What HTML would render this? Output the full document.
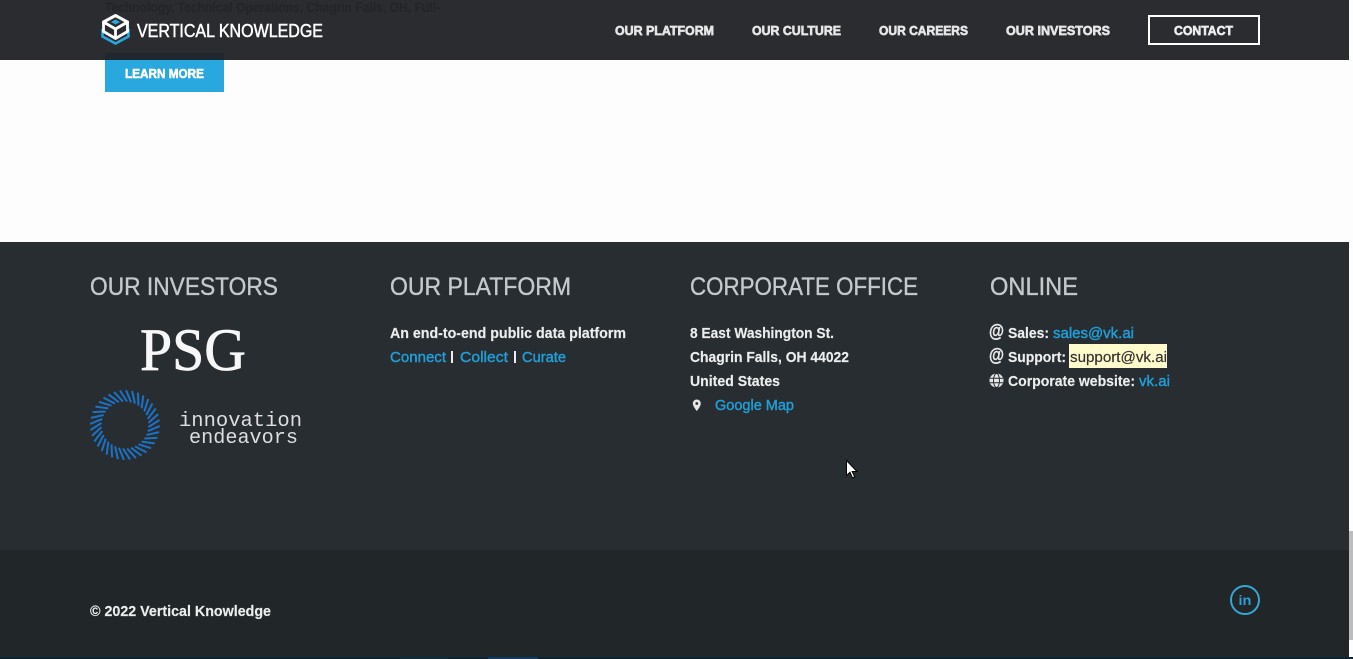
<!DOCTYPE html>
<html lang="en">
<head>
<meta charset="utf-8">
<title>Vertical Knowledge</title>
<style>
html,body{margin:0;padding:0;background:#fdfdfd;overflow:hidden}
svg{display:block;position:absolute;left:0;top:0}
text{font-family:"Liberation Sans",sans-serif}
.h{font-size:25px;fill:#c6c9cb;stroke:#c6c9cb;stroke-width:.35px}
.b{font-size:15px;font-weight:700;fill:#eceded;stroke:#eceded;stroke-width:.15px}
.l{font-size:15px;font-weight:400;fill:#219fd8;stroke:#219fd8;stroke-width:.4px}
.n{font-size:12.5px;font-weight:700;fill:#e6e6e7;stroke:#e6e6e7;stroke-width:.65px}
.m{font-family:"Liberation Mono",monospace;font-size:20.5px;fill:#dcdedf}
.a{font-size:18px;font-weight:700;fill:#e6e7e8;stroke:#e6e7e8;stroke-width:.4px}
</style>
</head>
<body>
<svg width="1353" height="659" viewBox="0 0 1353 659" xmlns="http://www.w3.org/2000/svg">
<rect width="1353" height="659" fill="#fdfdfd"/>

<!-- button -->
<rect x="105" y="53" width="119" height="39" fill="#29a8e0"/>
<text x="125" y="78" font-size="13" font-weight="700" fill="#fff" stroke="#fff" stroke-width=".6" textLength="79" lengthAdjust="spacingAndGlyphs">LEARN MORE</text>

<!-- header -->
<rect width="1349" height="60" fill="#2b2c30"/>
<rect x="105" y="53" width="119" height="7" fill="#20272f"/>
<text x="105" y="12" font-size="14" font-weight="700" fill="#232428" textLength="335" lengthAdjust="spacingAndGlyphs">Technology, Technical Operations, Chagrin Falls, OH, Full-</text>

<!-- logo -->
<path d="M102.500 29v7.500L115.500 43.500 128.500 36.500V29" fill="none" stroke="#29a8e0" stroke-width="2.600"/>
<path d="M115.500 15.500 127.500 22 115.500 29 103.500 22Z" fill="none" stroke="#fff" stroke-width="3" stroke-linejoin="round"/>
<path d="M103.500 22v9.500L115.500 38.500 127.500 31.500V22M115.500 29v9" fill="none" stroke="#fff" stroke-width="2.800"/>
<path d="M115.500 19.500 120 22 115.500 24.500 111 22Z" fill="#29a8e0"/>
<text x="137" y="37" font-size="18" fill="#fff" stroke="#fff" stroke-width=".5" textLength="186" lengthAdjust="spacingAndGlyphs">VERTICAL KNOWLEDGE</text>

<!-- nav -->
<text class="n" x="615" y="35" textLength="99" lengthAdjust="spacingAndGlyphs">OUR PLATFORM</text>
<text class="n" x="752" y="35" textLength="89" lengthAdjust="spacingAndGlyphs">OUR CULTURE</text>
<text class="n" x="879" y="35" textLength="89" lengthAdjust="spacingAndGlyphs">OUR CAREERS</text>
<text class="n" x="1006" y="35" textLength="104" lengthAdjust="spacingAndGlyphs">OUR INVESTORS</text>
<rect x="1149" y="16" width="110" height="28" fill="none" stroke="#fff" stroke-width="2"/>
<text class="n" x="1174" y="35" textLength="59" lengthAdjust="spacingAndGlyphs" style="fill:#f2f2f2">CONTACT</text>

<!-- footer -->
<rect y="242" width="1349" height="308" fill="#282d31"/>
<rect y="550" width="1349" height="107" fill="#212629"/>
<rect y="657" width="1353" height="2" fill="#0a2236"/>
<rect x="400" y="657" width="48" height="2" fill="#0b2f3a"/>
<rect x="488" y="657" width="50" height="2" fill="#0c3a60"/>
<rect x="1349" y="531" width="4" height="109" fill="#bdbdbd"/>

<text class="h" x="90" y="295" textLength="188" lengthAdjust="spacingAndGlyphs">OUR INVESTORS</text>
<text class="h" x="390" y="295" textLength="181" lengthAdjust="spacingAndGlyphs">OUR PLATFORM</text>
<text class="h" x="690" y="295" textLength="228" lengthAdjust="spacingAndGlyphs">CORPORATE OFFICE</text>
<text class="h" x="990" y="295" textLength="88" lengthAdjust="spacingAndGlyphs">ONLINE</text>

<!-- PSG -->
<text x="140" y="370" font-size="60" stroke="#f7f7f7" stroke-width=".7" style="font-family:'Liberation Serif',serif" fill="#f7f7f7" textLength="106" lengthAdjust="spacingAndGlyphs">PSG</text>

<!-- innovation endeavors ring -->
<g stroke="#1c72c4" stroke-width="2" fill="none">
<line x1="120" y1="390.500" x2="127" y2="401.500" transform="rotate(0 125 425)"/>
<line x1="120" y1="390.500" x2="127" y2="401.500" transform="rotate(10 125 425)"/>
<line x1="120" y1="390.500" x2="127" y2="401.500" transform="rotate(20 125 425)"/>
<line x1="120" y1="390.500" x2="127" y2="401.500" transform="rotate(30 125 425)"/>
<line x1="120" y1="390.500" x2="127" y2="401.500" transform="rotate(40 125 425)"/>
<line x1="120" y1="390.500" x2="127" y2="401.500" transform="rotate(50 125 425)"/>
<line x1="120" y1="390.500" x2="127" y2="401.500" transform="rotate(60 125 425)"/>
<line x1="120" y1="390.500" x2="127" y2="401.500" transform="rotate(70 125 425)"/>
<line x1="120" y1="390.500" x2="127" y2="401.500" transform="rotate(80 125 425)"/>
<line x1="120" y1="390.500" x2="127" y2="401.500" transform="rotate(90 125 425)"/>
<line x1="120" y1="390.500" x2="127" y2="401.500" transform="rotate(100 125 425)"/>
<line x1="120" y1="390.500" x2="127" y2="401.500" transform="rotate(110 125 425)"/>
<line x1="120" y1="390.500" x2="127" y2="401.500" transform="rotate(120 125 425)"/>
<line x1="120" y1="390.500" x2="127" y2="401.500" transform="rotate(130 125 425)"/>
<line x1="120" y1="390.500" x2="127" y2="401.500" transform="rotate(140 125 425)"/>
<line x1="120" y1="390.500" x2="127" y2="401.500" transform="rotate(150 125 425)"/>
<line x1="120" y1="390.500" x2="127" y2="401.500" transform="rotate(160 125 425)"/>
<line x1="120" y1="390.500" x2="127" y2="401.500" transform="rotate(170 125 425)"/>
<line x1="120" y1="390.500" x2="127" y2="401.500" transform="rotate(180 125 425)"/>
<line x1="120" y1="390.500" x2="127" y2="401.500" transform="rotate(190 125 425)"/>
<line x1="120" y1="390.500" x2="127" y2="401.500" transform="rotate(200 125 425)"/>
<line x1="120" y1="390.500" x2="127" y2="401.500" transform="rotate(210 125 425)"/>
<line x1="120" y1="390.500" x2="127" y2="401.500" transform="rotate(220 125 425)"/>
<line x1="120" y1="390.500" x2="127" y2="401.500" transform="rotate(230 125 425)"/>
<line x1="120" y1="390.500" x2="127" y2="401.500" transform="rotate(240 125 425)"/>
<line x1="120" y1="390.500" x2="127" y2="401.500" transform="rotate(250 125 425)"/>
<line x1="120" y1="390.500" x2="127" y2="401.500" transform="rotate(260 125 425)"/>
<line x1="120" y1="390.500" x2="127" y2="401.500" transform="rotate(270 125 425)"/>
<line x1="120" y1="390.500" x2="127" y2="401.500" transform="rotate(280 125 425)"/>
<line x1="120" y1="390.500" x2="127" y2="401.500" transform="rotate(290 125 425)"/>
<line x1="120" y1="390.500" x2="127" y2="401.500" transform="rotate(300 125 425)"/>
<line x1="120" y1="390.500" x2="127" y2="401.500" transform="rotate(310 125 425)"/>
<line x1="120" y1="390.500" x2="127" y2="401.500" transform="rotate(320 125 425)"/>
<line x1="120" y1="390.500" x2="127" y2="401.500" transform="rotate(330 125 425)"/>
<line x1="120" y1="390.500" x2="127" y2="401.500" transform="rotate(340 125 425)"/>
<line x1="120" y1="390.500" x2="127" y2="401.500" transform="rotate(350 125 425)"/>
</g>
<text class="m" x="179" y="426" textLength="123" lengthAdjust="spacingAndGlyphs">innovation</text>
<text class="m" x="189" y="443" textLength="109" lengthAdjust="spacingAndGlyphs">endeavors</text>

<!-- platform col -->
<text class="b" x="390" y="338" textLength="236" lengthAdjust="spacingAndGlyphs">An end-to-end public data platform</text>
<text class="l" x="390" y="362" textLength="56" lengthAdjust="spacingAndGlyphs">Connect</text>
<rect x="451" y="351" width="2" height="12" fill="#eceded"/>
<text class="l" x="460" y="362" textLength="48" lengthAdjust="spacingAndGlyphs">Collect</text>
<rect x="514" y="351" width="2" height="12" fill="#eceded"/>
<text class="l" x="522" y="362" textLength="44" lengthAdjust="spacingAndGlyphs">Curate</text>

<!-- office col -->
<text class="b" x="690" y="338" textLength="144" lengthAdjust="spacingAndGlyphs">8 East Washington St.</text>
<text class="b" x="690" y="362" textLength="159" lengthAdjust="spacingAndGlyphs">Chagrin Falls, OH 44022</text>
<text class="b" x="690" y="386" textLength="90" lengthAdjust="spacingAndGlyphs">United States</text>
<path d="M696.800 399.500a4 4 0 0 0-4 4c0 2.800 4 7.500 4 7.500s4-4.700 4-7.500a4 4 0 0 0-4-4Zm0 2.600a1.400 1.400 0 1 1 0 2.800 1.400 1.400 0 0 1 0-2.800Z" fill="#e6e6e6" fill-rule="evenodd"/>
<text class="l" x="715" y="410" textLength="79" lengthAdjust="spacingAndGlyphs">Google Map</text>

<!-- online col -->
<text class="a" x="989" y="337" textLength="15" lengthAdjust="spacingAndGlyphs">@</text>
<text class="b" x="1008" y="338" textLength="41" lengthAdjust="spacingAndGlyphs">Sales:</text>
<text class="l" x="1053" y="338" textLength="81" lengthAdjust="spacingAndGlyphs">sales@vk.ai</text>
<text class="a" x="989" y="361" textLength="15" lengthAdjust="spacingAndGlyphs">@</text>
<text class="b" x="1008" y="362" textLength="58" lengthAdjust="spacingAndGlyphs">Support:</text>
<rect x="1069" y="344" width="98" height="24" fill="#fffbcc"/>
<text x="1070" y="362" font-size="15" fill="#333" stroke="#333" stroke-width=".2" textLength="97" lengthAdjust="spacingAndGlyphs">support@vk.ai</text>
<circle cx="996.500" cy="380.500" r="7" fill="#e6e7e8"/>
<ellipse cx="996.500" cy="380.500" rx="3" ry="7" fill="none" stroke="#282d31" stroke-width="1"/>
<path d="M990 378.300h13M990 382.700h13" fill="none" stroke="#282d31" stroke-width="1"/>
<text class="b" x="1008" y="386" textLength="127" lengthAdjust="spacingAndGlyphs">Corporate website:</text>
<text class="l" x="1139" y="386" textLength="31" lengthAdjust="spacingAndGlyphs">vk.ai</text>

<!-- bottom -->
<text class="b" x="90" y="616" textLength="181" lengthAdjust="spacingAndGlyphs">© 2022 Vertical Knowledge</text>
<circle cx="1245" cy="600" r="14" fill="none" stroke="#36a6d3" stroke-width="2"/>
<text x="1238.500" y="605" font-size="14" font-weight="700" fill="#2c9fd8" textLength="13" lengthAdjust="spacingAndGlyphs">in</text>

<!-- cursor -->
<path d="M846.500 460.500v15l3.500-3.300 2.500 5.800 2.200-1-2.500-5.500h4.800Z" fill="#fff" stroke="#000" stroke-width="1"/>
</svg>
</body>
</html>
